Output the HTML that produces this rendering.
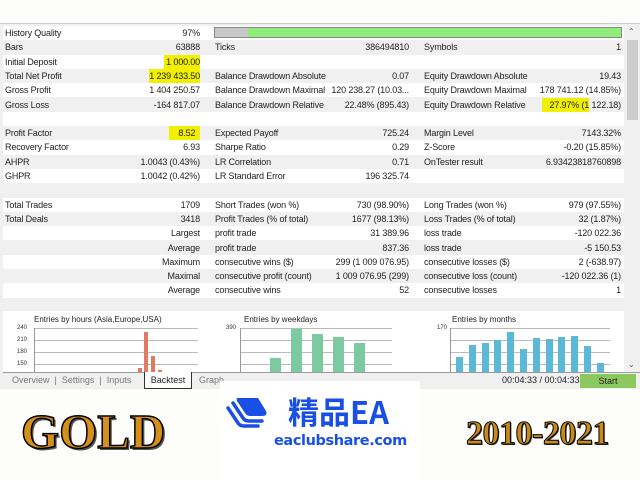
<!DOCTYPE html>
<html><head><meta charset="utf-8"><style>
*{margin:0;padding:0;box-sizing:border-box}
body{width:640px;height:480px;overflow:hidden;background:#fdfdfb;position:relative;font-family:"Liberation Sans",sans-serif;font-size:9px;color:#222}
.a{position:absolute;white-space:nowrap}
.frame{position:absolute;left:0;top:23px;width:640px;height:367px;background:#f0f0f0;border-top:1px solid #ccc}
.row{position:absolute;left:3px;width:621px;height:14.3px}
.g{background:#f0f0f0}.w{background:#fff}
.t{position:absolute;top:2px;white-space:nowrap;letter-spacing:-0.15px}
.r{text-align:right}
.hl{background:#f0f000;padding:2px 0 3px}
.grid{position:absolute;height:1px;background:#bbb}
.ax{position:absolute;font-size:6px;color:#333}
</style></head><body>
<div class="frame"></div>
<div class="a" style="left:625px;top:26px;width:15px;height:346px;background:#f0f0f0"></div>
<div class="a" style="left:627px;top:40px;width:11px;height:80px;background:#cdcdcd"></div>
<div class="a" style="left:628px;top:27px;font-size:8px;color:#555">&#8963;</div>
<div class="a" style="left:628px;top:360px;font-size:8px;color:#555">&#8964;</div>
<div id="rows"></div>
<script>
const R=[
["History Quality","97%","","","",""],
["Bars","63888","Ticks","386494810","Symbols","1"],
["Initial Deposit","<span class=hl>&nbsp;1 000.00</span>","","","",""],
["Total Net Profit","<span class=hl>1 239 433.50</span>","Balance Drawdown Absolute","0.07","Equity Drawdown Absolute","19.43"],
["Gross Profit","1 404 250.57","Balance Drawdown Maximal","120 238.27 (10.03...","Equity Drawdown Maximal","178 741.12 (14.85%)"],
["Gross Loss","-164 817.07","Balance Drawdown Relative","22.48% (895.43)","Equity Drawdown Relative","<span class=hl>&nbsp;&nbsp;&nbsp;27.97% (1</span> 122.18)"],
["","","","","",""],
["Profit Factor","<span class=hl>&nbsp;&nbsp;&nbsp;&nbsp;8.52&nbsp;&nbsp;</span>","Expected Payoff","725.24","Margin Level","7143.32%"],
["Recovery Factor","6.93","Sharpe Ratio","0.29","Z-Score","-0.20 (15.85%)"],
["AHPR","1.0043 (0.43%)","LR Correlation","0.71","OnTester result","6.93423818760898"],
["GHPR","1.0042 (0.42%)","LR Standard Error","196 325.74","",""],
["","","","","",""],
["Total Trades","1709","Short Trades (won %)","730 (98.90%)","Long Trades (won %)","979 (97.55%)"],
["Total Deals","3418","Profit Trades (% of total)","1677 (98.13%)","Loss Trades (% of total)","32 (1.87%)"],
["","Largest","profit trade","31 389.96","loss trade","-120 022.36"],
["","Average","profit trade","837.36","loss trade","-5 150.53"],
["","Maximum","consecutive wins ($)","299 (1 009 076.95)","consecutive losses ($)","2 (-638.97)"],
["","Maximal","consecutive profit (count)","1 009 076.95 (299)","consecutive loss (count)","-120 022.36 (1)"],
["","Average","consecutive wins","52","consecutive losses","1"],
["","","","","",""]];
let h="";
R.forEach((r,i)=>{const y=26+i*14.3;
h+=`<div class="row ${i%2?'g':'w'}" style="top:${y}px">
<span class="t" style="left:2px">${r[0]}</span>
<span class="t r" style="right:424px">${r[1]}</span>
<span class="t" style="left:212px">${r[2]}</span>
<span class="t r" style="right:215px">${r[3]}</span>
<span class="t" style="left:421px">${r[4]}</span>
<span class="t r" style="right:3px">${r[5]}</span></div>`});
document.getElementById("rows").innerHTML=h;
</script>
<div class="a" style="left:214px;top:27px;width:408px;height:11px;background:#90ee78;border:1px solid #888"></div>
<div class="a" style="left:215px;top:28px;width:33px;height:9px;background:#c8c8c8"></div>
<div class="a" style="left:3px;top:311px;width:621px;height:61px;background:#fff"></div>
<div class="a" style="left:34px;top:315px;font-size:8px">Entries by hours (Asia,Europe,USA)</div>
<div class="a" style="left:244px;top:315px;font-size:8px">Entries by weekdays</div>
<div class="a" style="left:452px;top:315px;font-size:8px">Entries by months</div>
<div class="ax" style="left:17px;top:325px">240</div><div class="ax" style="left:17px;top:337px">210</div><div class="ax" style="left:17px;top:349px">180</div><div class="ax" style="left:17px;top:361px">150</div>
<div class="ax" style="left:226px;top:325px">390</div><div class="ax" style="left:437px;top:325px">170</div>
<div class="grid" style="left:34px;top:328px;width:164px"></div><div class="grid" style="left:34px;top:340px;width:164px"></div><div class="grid" style="left:34px;top:352px;width:164px"></div><div class="grid" style="left:34px;top:364px;width:164px"></div>
<div class="grid" style="left:240px;top:328px;width:152px"></div><div class="grid" style="left:240px;top:340px;width:152px"></div><div class="grid" style="left:240px;top:352px;width:152px"></div><div class="grid" style="left:240px;top:364px;width:152px"></div>
<div class="grid" style="left:450px;top:328px;width:160px"></div><div class="grid" style="left:450px;top:340px;width:160px"></div><div class="grid" style="left:450px;top:352px;width:160px"></div><div class="grid" style="left:450px;top:364px;width:160px"></div>
<div class="a" style="left:34px;top:328px;width:1px;height:44px;background:#999"></div>
<div class="a" style="left:240px;top:328px;width:1px;height:44px;background:#999"></div>
<div class="a" style="left:450px;top:328px;width:1px;height:44px;background:#999"></div>
<div class="a" style="left:138px;top:368px;width:4px;height:4px;background:#e07a60"></div>
<div class="a" style="left:144px;top:332px;width:4px;height:40px;background:#e07a60"></div>
<div class="a" style="left:151px;top:356px;width:4px;height:16px;background:#e07a60"></div>
<div class="a" style="left:158px;top:370px;width:4px;height:2px;background:#e07a60"></div>
<div class="a" style="left:270px;top:358px;width:11px;height:14px;background:#7ccaa0"></div>
<div class="a" style="left:291px;top:329px;width:11px;height:43px;background:#7ccaa0"></div>
<div class="a" style="left:312px;top:334px;width:11px;height:38px;background:#7ccaa0"></div>
<div class="a" style="left:333px;top:337px;width:11px;height:35px;background:#7ccaa0"></div>
<div class="a" style="left:354px;top:343px;width:11px;height:29px;background:#7ccaa0"></div>
<div id="m"></div>
<script>
const t=[357,345,343,340,332,349,338,339,337,336,346,363];let s="";
t.forEach((y,i)=>{s+=`<div class="a" style="left:${456+i*12.8}px;top:${y}px;width:7px;height:${372-y}px;background:#5bb8d6"></div>`});
document.getElementById("m").innerHTML=s;
</script>
<div class="a" style="left:3px;top:372px;width:637px;height:17px;background:#f0f0f0;border-top:1px solid #999"></div>
<div class="a" style="left:12px;top:375px;font-size:9px;color:#777">Overview&nbsp;&nbsp;|&nbsp;&nbsp;Settings&nbsp;&nbsp;|&nbsp;&nbsp;Inputs</div>
<div class="a" style="left:144px;top:372px;width:48px;height:17px;background:#fff;border:1px solid #333;border-top:none;font-size:9px;text-align:center;padding-top:3px">Backtest</div>
<div class="a" style="left:199px;top:375px;font-size:9px;color:#777">Graph</div>
<div class="a" style="left:502px;top:375px;font-size:9px">00:04:33 / 00:04:33</div>
<div class="a" style="left:580px;top:374px;width:56px;height:14px;background:#8cc860;font-size:9px;text-align:center;padding-top:2px">Start</div>
<div class="a" style="left:0;top:389px;width:640px;height:91px;background:#fdfdfb"></div>
<div class="a" style="left:220px;top:381px;width:200px;height:99px;background:#fff"></div>
<svg class="a" style="left:224px;top:395px" width="46" height="36" viewBox="0 0 46 36">
<path d="M4 13 L14 28 Q16 31 20 31 L34 31" fill="none" stroke="#1a4fe6" stroke-width="3.5" stroke-linecap="round"/>
<path d="M9 8 L19 23 Q21 26 25 26 L38 26" fill="none" stroke="#1a4fe6" stroke-width="3.5" stroke-linecap="round"/>
<path d="M14 3 L34 3 L42 16 Q44 21 38 21 L26 21 Q23 21 21 18 L13 6 Q12 3 14 3Z" fill="#1a4fe6"/>
</svg>
<div class="a" style="left:288px;top:391px;font-family:'Noto Sans CJK SC',sans-serif;font-weight:bold;font-size:31px;color:#1a4fe6;line-height:40px">精品EA</div>
<div class="a" style="left:274px;top:433px;font-family:'DejaVu Sans',sans-serif;font-weight:bold;font-size:14.5px;color:#1a4fe6;letter-spacing:-0.4px">eaclubshare.com</div>
<div class="a" style="left:21px;top:402px;font-family:'Liberation Serif',serif;font-weight:bold;font-size:49px;color:#d4901a;-webkit-text-stroke:1.5px #000;text-shadow:2px 2px 0 #555;line-height:60px">GOLD</div>
<div class="a" style="left:466px;top:414px;font-family:'Liberation Serif',serif;font-weight:bold;font-size:34px;color:#c88a1a;-webkit-text-stroke:1px #000;text-shadow:1px 1px 0 #333;line-height:40px;letter-spacing:-0.5px">2010-2021</div>
</body></html>
